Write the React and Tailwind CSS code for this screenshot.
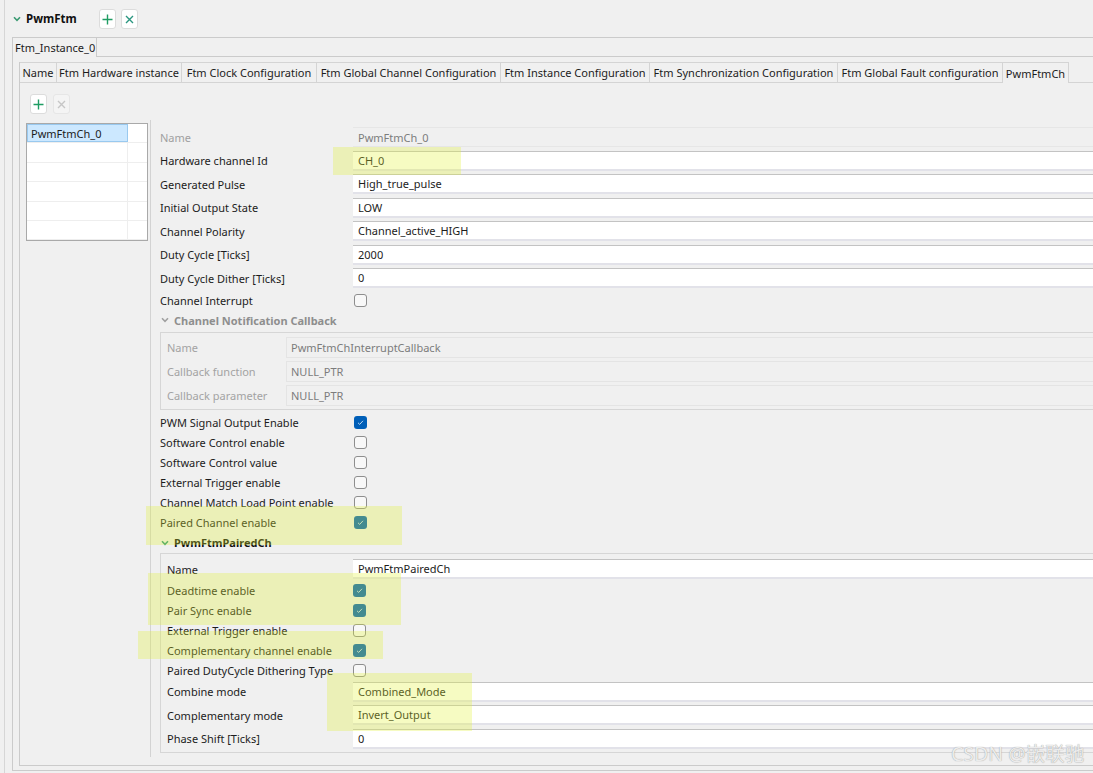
import React from "react";

const Plus = ({ color = "#1f9d63" }) => (
  <svg width="11" height="11" viewBox="0 0 11 11">
    <path d="M5.5 0.5V10.5M0.5 5.5H10.5" stroke={color} strokeWidth="1.4" />
  </svg>
);

const Cross = ({ color = "#2a9680" }) => (
  <svg width="9" height="9" viewBox="0 0 9 9">
    <path d="M1 1L8 8M8 1L1 8" stroke={color} strokeWidth="1.4" />
  </svg>
);

const Chevron = ({ color }) => (
  <svg width="8" height="6" viewBox="0 0 8 6">
    <path d="M1 1.3L4 4.3L7 1.3" fill="none" stroke={color} strokeWidth="1.6" />
  </svg>
);

const Check = ({ checked }) =>
  checked ? (
    <div className="w-[13px] h-[13px] rounded-[3px] bg-[#005fb8] flex items-center justify-center shrink-0">
      <svg width="9" height="9" viewBox="0 0 9 9">
        <path d="M2 4.8L3.7 6.4L7 2.8" fill="none" stroke="#b9d6f2" strokeWidth="1" />
      </svg>
    </div>
  ) : (
    <div className="w-[13px] h-[13px] rounded-[3px] border border-[#8e8e8e] bg-[#f8f8f8] shrink-0" />
  );

const Field = ({ value }) => (
  <div className="flex-1 h-[20px] bg-white border-t border-t-[#c3c3c3] border-b-2 border-b-[#e2e2e9] pl-[5px] flex items-center whitespace-nowrap">
    {value}
  </div>
);

const TopField = ({ label, value }) => (
  <div className="flex items-start h-[23.5px]">
    <div className="w-[193px] h-[20px] flex items-center shrink-0 whitespace-nowrap">{label}</div>
    <Field value={value} />
  </div>
);

const TopCheck = ({ label, checked, h = "h-[20px]" }) => (
  <div className={"flex items-center " + h}>
    <div className="w-[194px] shrink-0 whitespace-nowrap">{label}</div>
    <Check checked={checked} />
  </div>
);

const PairCheck = ({ label, checked }) => (
  <div className="flex items-center h-[20px]">
    <div className="w-[186px] shrink-0 whitespace-nowrap">{label}</div>
    <Check checked={checked} />
  </div>
);

const PairField = ({ label, value }) => (
  <div className="flex items-center h-[23.5px]">
    <div className="w-[186px] shrink-0 whitespace-nowrap">{label}</div>
    <Field value={value} />
  </div>
);

const CbRow = ({ label, value }) => (
  <div className="flex items-start h-[24px]">
    <div className="w-[119px] h-[21px] flex items-center shrink-0 text-[#a3a3a3] whitespace-nowrap">{label}</div>
    <div className="flex-1 h-[21px] border-l border-t border-b border-[#e4e4e4] pl-[4px] flex items-center text-[#7c7c7c] whitespace-nowrap">
      {value}
    </div>
  </div>
);

const tabs = [
  { t: "Name", w: "w-[37px]" },
  { t: "Ftm Hardware instance", w: "w-[125px]" },
  { t: "Ftm Clock Configuration", w: "w-[135px]" },
  { t: "Ftm Global Channel Configuration", w: "w-[184px]" },
  { t: "Ftm Instance Configuration", w: "w-[149px]" },
  { t: "Ftm Synchronization Configuration", w: "w-[188px]" },
  { t: "Ftm Global Fault configuration", w: "w-[165px]" },
];

export default function App() {
  return (
    <div className="relative w-[1093px] h-[773px] overflow-hidden bg-[#f0f0f0] text-[11px] leading-none text-[#1c1c1c] font-['Noto_Sans',sans-serif]">
      <div className="ml-[4px] h-full border-l border-[#d6d6d6] flex flex-col">
        {/* header */}
        <div className="h-[37px] shrink-0 flex items-start pt-[9px]">
          <div className="ml-[8px] w-[13px] h-[20px] flex items-center">
            <Chevron color="#3a9a72" />
          </div>
          <div className="w-[73px] h-[20px] flex items-center font-bold text-[11.5px] text-[#111]">PwmFtm</div>
          <div className="w-[17px] h-[20px] bg-white border border-[#dcdcdc] rounded-[3px] flex items-center justify-center">
            <Plus />
          </div>
          <div className="ml-[5px] w-[17px] h-[20px] bg-white border border-[#dcdcdc] rounded-[3px] flex items-center justify-center">
            <Cross />
          </div>
        </div>

        {/* outer frame */}
        <div className="ml-[7px] h-[734px] shrink-0 border-l border-b border-[#cbcbcb] flex flex-col">
          <div className="h-[20px] shrink-0 flex border-t border-[#cbcbcb]">
            <div className="w-[84px] shrink-0 border-r border-[#cbcbcb] pl-[2px] flex items-center whitespace-nowrap">
              Ftm_Instance_0
            </div>
            <div className="flex-1 border-b border-[#cbcbcb]" />
          </div>

          <div className="flex-1 pl-[6px] pt-[5px]">
            {/* inner frame */}
            <div className="h-[704px] border-l border-b border-[#cbcbcb] flex flex-col">
              <div className="h-[21px] shrink-0 flex">
                {tabs.map((tb) => (
                  <div
                    key={tb.t}
                    className={
                      "shrink-0 h-full border-t border-r border-b border-[#d4d4d4] flex items-center justify-center whitespace-nowrap " +
                      tb.w
                    }
                  >
                    {tb.t}
                  </div>
                ))}
                <div className="w-[66px] shrink-0 h-full border-t border-r border-[#d4d4d4] flex items-center justify-center whitespace-nowrap">
                  PwmFtmCh
                </div>
                <div className="flex-1 h-full border-b border-[#d4d4d4]" />
              </div>

              {/* content */}
              <div className="flex-1 flex flex-col pt-[11px]">
                <div className="h-[20px] flex ml-[10px]">
                  <div className="w-[17px] h-[20px] bg-white border border-[#dcdcdc] rounded-[3px] flex items-center justify-center">
                    <Plus />
                  </div>
                  <div className="ml-[6px] w-[17px] h-[20px] bg-[#f4f4f4] border border-[#e6e6e6] rounded-[3px] flex items-center justify-center">
                    <Cross color="#c6c6c6" />
                  </div>
                </div>

                <div className="mt-[6px] h-[637px] flex">
                  {/* left list */}
                  <div className="w-[130px] shrink-0 pl-[6px] pt-[3px]">
                    <div className="w-[122px] h-[118px] bg-white border border-[#a9a9a9] flex flex-col overflow-hidden">
                      <div className="h-[19.4px] shrink-0 flex border-b border-[#eeeeee]">
                        <div className="w-[101px] h-full bg-[#cce8ff] border border-[#99c9ef] pl-[3px] flex items-center whitespace-nowrap">
                          PwmFtmCh_0
                        </div>
                        <div className="flex-1" />
                      </div>
                      {[0, 1, 2, 3, 4].map((i) => (
                        <div key={i} className="h-[19.4px] shrink-0 flex border-b border-[#eeeeee]">
                          <div className="w-[101px] h-full border-r border-[#eeeeee]" />
                        </div>
                      ))}
                    </div>
                  </div>

                  {/* right props */}
                  <div className="flex-1 min-w-0 border-l border-[#d3d3d3] pl-[9px] pt-[7px] flex flex-col">
                    <div className="flex items-start h-[23.5px]">
                      <div className="w-[193px] h-[20px] flex items-center shrink-0 text-[#a0a0a0]">Name</div>
                      <div className="flex-1 h-[20px] border-t border-b border-[#e6e6e6] pl-[5px] flex items-center text-[#7d7d7d]">
                        PwmFtmCh_0
                      </div>
                    </div>
                    <TopField label="Hardware channel Id" value="CH_0" />
                    <TopField label="Generated Pulse" value="High_true_pulse" />
                    <TopField label="Initial Output State" value="LOW" />
                    <TopField label="Channel Polarity" value="Channel_active_HIGH" />
                    <TopField label="Duty Cycle [Ticks]" value="2000" />
                    <TopField label="Duty Cycle Dither [Ticks]" value="0" />
                    <TopCheck label="Channel Interrupt" checked={false} h="h-[17px]" />

                    <div className="h-[23.5px] flex items-center">
                      <div className="w-[14px] pl-[1px] flex items-center">
                        <Chevron color="#a0a0a0" />
                      </div>
                      <div className="font-bold text-[#8e8e8e]">Channel Notification Callback</div>
                    </div>
                    <div className="border-l border-t border-b border-[#d6d6d6] pl-[6px] pt-[4px] h-[78px]">
                      <CbRow label="Name" value="PwmFtmChInterruptCallback" />
                      <CbRow label="Callback function" value="NULL_PTR" />
                      <CbRow label="Callback parameter" value="NULL_PTR" />
                    </div>

                    <div className="mt-[2px]">
                      <TopCheck label="PWM Signal Output Enable" checked />
                      <TopCheck label="Software Control enable" checked={false} />
                      <TopCheck label="Software Control value" checked={false} />
                      <TopCheck label="External Trigger enable" checked={false} />
                      <TopCheck label="Channel Match Load Point enable" checked={false} />
                      <TopCheck label="Paired Channel enable" checked />
                    </div>

                    <div className="h-[21px] flex items-center">
                      <div className="w-[14px] pl-[1px] flex items-center">
                        <Chevron color="#2f9a7a" />
                      </div>
                      <div className="font-bold text-[#111]">PwmFtmPairedCh</div>
                    </div>
                    <div className="border-l border-t border-b border-[#d6d6d6] pl-[6px] pt-[5px] h-[200px]">
                      <div className="flex items-start h-[21px]">
                        <div className="w-[186px] h-[20px] flex items-center shrink-0">Name</div>
                        <Field value="PwmFtmPairedCh" />
                      </div>
                      <PairCheck label="Deadtime enable" checked />
                      <PairCheck label="Pair Sync enable" checked />
                      <PairCheck label="External Trigger enable" checked={false} />
                      <PairCheck label="Complementary channel enable" checked />
                      <PairCheck label="Paired DutyCycle Dithering Type" checked={false} />
                      <PairField label="Combine mode" value="Combined_Mode" />
                      <PairField label="Complementary mode" value="Invert_Output" />
                      <PairField label="Phase Shift [Ticks]" value="0" />
                    </div>
                  </div>
                </div>
              </div>
            </div>
          </div>
        </div>
      </div>

      {/* highlight marks */}
      <div className="absolute left-[333px] top-[147px] w-[128px] h-[28px] bg-[rgba(226,241,52,0.3)]" />
      <div className="absolute left-[146px] top-[506px] w-[256px] h-[39px] bg-[rgba(226,241,52,0.3)]" />
      <div className="absolute left-[148px] top-[573px] w-[253px] h-[52px] bg-[rgba(226,241,52,0.3)]" />
      <div className="absolute left-[138px] top-[631px] w-[245px] h-[28px] bg-[rgba(226,241,52,0.3)]" />
      <div className="absolute left-[327px] top-[673px] w-[145px] h-[58px] bg-[rgba(226,241,52,0.3)]" />

      {/* watermark */}
      <div className="absolute left-[951px] top-[744px] text-[19.5px] leading-none text-[#ececec] font-['Noto_Sans','Noto_Sans_CJK_SC',sans-serif] [text-shadow:0_0_1px_#8c8c8c] whitespace-nowrap">
        CSDN @嵌联驰
      </div>
    </div>
  );
}
